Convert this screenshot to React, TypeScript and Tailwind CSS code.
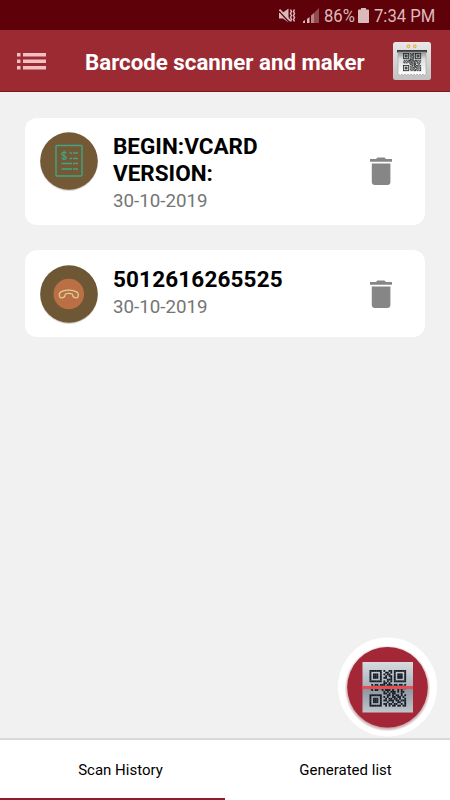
import type { ReactNode } from "react";

const qrRows = [
  "111111101001101111111",
  "100000100110101000001",
  "101110101011001011101",
  "101110100101101011101",
  "101110101100101011101",
  "100000100011101000001",
  "111111101010101111111",
  "000000001101000000000",
  "010110111011101101101",
  "001001010110110110010",
  "110101101101011011011",
  "010110010111010010100",
  "000000001010111010110",
  "000000001101011000100",
  "111111100011010110101",
  "100000101010011011010",
  "101110100101101101001",
  "101110101101110110111",
  "101110100010010011001",
  "100000101101101100101",
  "111111100101011011011",
];

const QrCode = ({ x, y, size, color }: { x: number; y: number; size: number; color: string }) => {
  const cell = size / 21;
  return (
    <g fill={color}>
      {qrRows.map((row, r) =>
        [...row].map((bit, c) =>
          bit === "1" ? (
            <rect key={`${r}-${c}`} x={x + c * cell} y={y + r * cell} width={cell + 0.1} height={cell + 0.1} />
          ) : null
        )
      )}
    </g>
  );
};

const StatusBar = () => (
  <div className="flex h-[30px] items-center bg-[#5e0108] pl-[279px] text-[#dcb9bb]">
    <svg width="17" height="17" viewBox="0 0 17 17" className="mr-[7px] shrink-0">
      <path d="M0 5.500h4l5.500-4v14L4 11.500H0z" fill="currentColor" />
      <path d="M0 4l10 11" stroke="#5e0108" strokeWidth="1.300" />
      <path d="M.5 2.500l11 11.500" stroke="currentColor" strokeWidth="1.800" />
      <path d="M11.500 2.500l1 2-1 2 1 2-1 2 1 2-1 2M15.500 2.500l-1 2 1 2-1 2 1 2-1 2 1 2" fill="none" stroke="currentColor" strokeWidth="1.500" />
    </svg>
    <svg width="16" height="15" viewBox="0 0 16 15" className="mr-[5px] shrink-0">
      <path d="M0 13.500L2 12v3H0zM4 11l2.500-2v6H4z" fill="currentColor" />
      <path d="M8 7.500l3-2.500V15H8z" fill="#b98488" />
      <path d="M11 5l5-5v15h-5z" fill="#8e4c51" />
    </svg>
    <span className="w-[34px] origin-left scale-x-[0.9] whitespace-nowrap pt-[2px] text-[18.500px] leading-[30px]">86%</span>
    <svg width="11" height="15" viewBox="0 0 11 15" className="mr-[5px] shrink-0">
      <path d="M3 0h5v1.500h2c.6 0 1 .4 1 1V14c0 .6-.4 1-1 1H1c-.6 0-1-.4-1-1V2.500c0-.6.4-1 1-1h2z" fill="currentColor" />
    </svg>
    <span className="origin-left scale-x-[0.9] whitespace-nowrap pt-[2px] text-[18.500px] leading-[30px]">7:34 PM</span>
  </div>
);

const PrinterIcon = () => (
  <svg width="38" height="38" viewBox="0 0 38 38" className="shrink-0">
    <defs>
      <linearGradient id="printer" x1="0" y1="0" x2="0" y2="1">
        <stop offset="0" stopColor="#e9e7e7" />
        <stop offset="1" stopColor="#c3c0c1" />
      </linearGradient>
      <linearGradient id="paper" x1="0" y1="0" x2="0" y2="1">
        <stop offset="0" stopColor="#8f9394" />
        <stop offset=".3" stopColor="#dce0e0" />
        <stop offset="1" stopColor="#fff" />
      </linearGradient>
    </defs>
    <rect width="38" height="38" rx="2.500" fill="url(#printer)" />
    <circle cx="15.500" cy="4.300" r="1.400" fill="#f3df9c" stroke="#dfac36" />
    <circle cx="21.800" cy="4.300" r="1.400" fill="#f3df9c" stroke="#dfac36" />
    <rect x="4" y="8" width="30" height="2.500" fill="#3c3c3d" />
    <path d="M5 10h28v22l-1.500 1.300L30 32l-1.500 1.300L27 32l-1.500 1.300L24 32l-1.500 1.300L21 32l-1.500 1.300L18 32l-1.500 1.300L15 32l-1.500 1.300L12 32l-1.500 1.300L9 32l-1.500 1.300L5 32z" fill="url(#paper)" stroke="#969495" strokeWidth=".5" />
    <QrCode x={10} y={11} size={18} color="#202122" />
  </svg>
);

const Header = () => (
  <header className="flex h-[62px] items-center border-b border-[#7d1821] bg-[#9b2a33] pr-[19px] pl-[17px]">
    <svg width="29" height="18" viewBox="0 -1 29 18" className="mr-[39px] shrink-0" fill="#f3bfc2">
      <path d="M0 0h3.500v3.500H0zM6 0h23v3.500H6zM0 6.500h3.500V10H0zM6 6.500h23V10H6zM0 13h3.500v3.500H0zM6 13h23v3.500H6z" />
    </svg>
    <h1 className="grow origin-left scale-x-[0.99] whitespace-nowrap pt-[4px] text-[22.500px] font-bold text-white">
      Barcode scanner and maker
    </h1>
    <PrinterIcon />
  </header>
);

const DocumentIcon = () => (
  <svg width="58" height="60" viewBox="0 0 58 60" className="shrink-0">
    <circle cx="29" cy="30.200" r="28.800" fill="#d8d6d2" />
    <circle cx="29" cy="29" r="28.800" fill="#745936" />
    <g fill="none" stroke="#3fa583" strokeWidth="1.400">
      <rect x="16" y="13.500" width="26" height="30.500" rx="1" />
      <path d="M29.500 21h2.500M33 21h5M29.500 26.500h2.500M33 26.500h5M21.500 31.500h10.500M33 31.500h5M21.500 37h10.500M33 37h5" />
      <path d="M26.300 21.500c-.5-2-4.800-1.500-4.500.7.200 2 4.500 1.200 4.700 3.300.1 2.200-4.500 2.300-5 .1M24 18.500v9.500" strokeWidth="1.200" />
    </g>
  </svg>
);

const PhoneIcon = () => (
  <svg width="58" height="60" viewBox="0 0 58 60" className="shrink-0">
    <circle cx="29" cy="30.200" r="28.800" fill="#d8d6d2" />
    <circle cx="29" cy="29" r="28.800" fill="#6d5734" />
    <circle cx="28.800" cy="29" r="15.300" fill="#ba7044" />
    <path d="M19.500 30.800c-.8-2.300.7-3.800 3.200-4.600 3.500-1.200 8.600-1.200 12.100 0 2.500.8 4.200 2.300 3.400 4.600-.2 1.700-1 2.200-2.500 2-1.900-.1-2.900-.7-3-2.500 0-1.100-.5-1.500-1.600-1.700a10 10 0 0 0-4.600 0c-1.100.2-1.500.6-1.500 1.700-.1 1.800-1.100 2.400-3 2.500-1.500.2-2.300-.3-2.500-2z" fill="none" stroke="#dfce98" strokeWidth="1.300" />
  </svg>
);

const TrashIcon = () => (
  <svg width="22" height="28" viewBox="0 0 22 28" className="shrink-0" fill="#868686">
    <path d="M0 2h6l1.500-1.600h7L16 2h6v2.800H0zM1.800 6.400h18.600V25c0 2-1.200 3-3 3H4.800c-1.800 0-3-1-3-3z" />
  </svg>
);

const items: { id: number; title: string; date: string; icon: ReactNode; height: string; tracking: string }[] = [
  { id: 1, title: "BEGIN:VCARD VERSION:", date: "30-10-2019", icon: <DocumentIcon />, height: "h-[107.500px]", tracking: "tracking-normal" },
  { id: 2, title: "5012616265525", date: "30-10-2019", icon: <PhoneIcon />, height: "h-[87px]", tracking: "tracking-[0.15px]" },
];

const ScanButton = () => (
  <button className="absolute top-[637px] left-[338px]" aria-label="Scan">
    <svg width="100" height="100" viewBox="0 0 100 100">
      <defs>
        <linearGradient id="tile" x1="0" y1="0" x2="0" y2="1">
          <stop offset="0" stopColor="#d7dbe0" />
          <stop offset=".48" stopColor="#aab3bb" />
          <stop offset=".52" stopColor="#8c969f" />
          <stop offset="1" stopColor="#c0c6cb" />
        </linearGradient>
        <radialGradient id="halo">
          <stop offset=".9" stopColor="#b98f95" />
          <stop offset="1" stopColor="#fff" />
        </radialGradient>
      </defs>
      <circle cx="49.500" cy="50" r="49.500" fill="#fff" />
      <circle cx="49.500" cy="51.500" r="43" fill="url(#halo)" />
      <circle cx="49.500" cy="50.300" r="40.300" fill="#a42738" />
      <rect x="24.500" y="25" width="50.500" height="50.500" fill="url(#tile)" />
      <QrCode x={31.5} y={33} size={36.5} color="#151b24" />
      <rect x="24.500" y="49" width="50.500" height="3" fill="#e94d54" />
    </svg>
  </button>
);

export default function App() {
  return (
    <div className="relative flex h-[800px] w-[450px] flex-col overflow-hidden bg-[#f1f1f1] font-[Roboto,sans-serif]">
      <StatusBar />
      <Header />
      <main className="flex grow flex-col gap-[25px] px-[25px] pt-[25.500px]">
        {items.map((item) => (
          <div key={item.id} className={`flex rounded-xl bg-white pr-[33px] pl-[15px] ${item.height}`}>
            <div className="pt-[14.500px]">{item.icon}</div>
            <div className="ml-[15px] w-[200px] pt-[15.500px]">
              <h2 className={`text-[22.500px] leading-[26.500px] font-bold text-black ${item.tracking}`}>{item.title}</h2>
              <p className="origin-left scale-x-[0.985] pt-px text-[19px] leading-[28px] text-[#757575]">{item.date}</p>
            </div>
            <button className="ml-auto" aria-label="Delete">
              <TrashIcon />
            </button>
          </div>
        ))}
      </main>
      <nav className="flex h-[62px] border-t-2 border-[#d9d9d9] bg-white text-[15px] text-black">
        <button className="w-[225px] border-b-2 border-[#8a1c2b] pt-[3px] pl-4">Scan History</button>
        <button className="w-[225px] border-b-2 border-white pt-[3px] pl-4">Generated list</button>
      </nav>
      <ScanButton />
    </div>
  );
}
